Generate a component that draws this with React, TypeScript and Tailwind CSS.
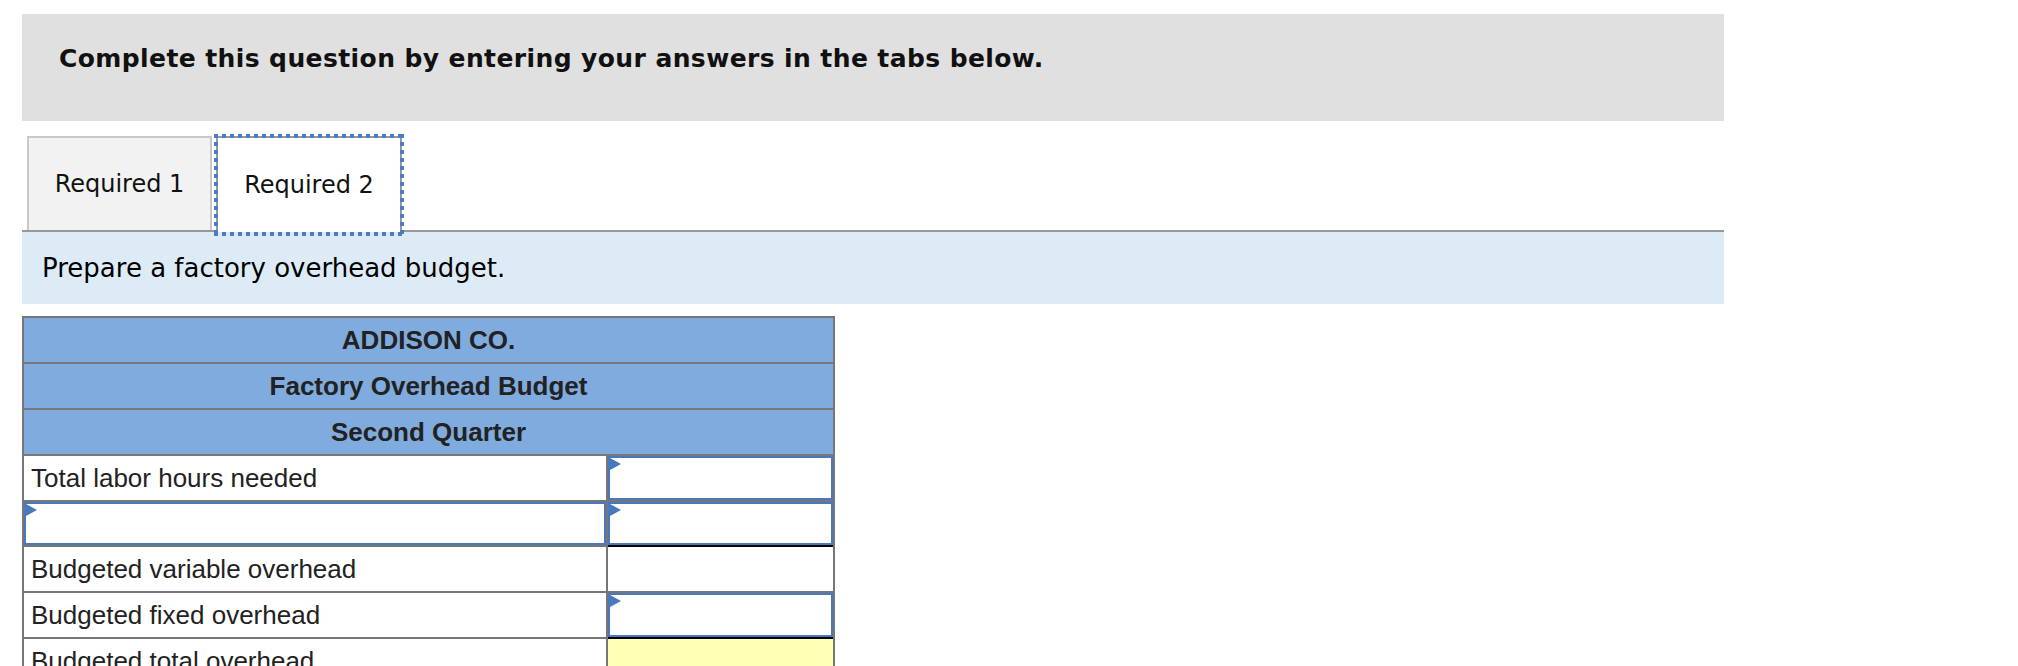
import React from "react";

const labelCell = "flex items-center border-t-2 border-r-2 border-[#777] pl-[7px]";

function Flag() {
  return (
    <svg className="absolute left-0 top-0" width="11" height="12" viewBox="0 0 11 12">
      <path d="M0 0 L11 6 L0 12 Z" fill="#4a78bf" />
    </svg>
  );
}

function InputBox({ bg = "bg-white" }: { bg?: string }) {
  return (
    <div className={`relative h-full w-full border-2 border-[#4a78bf] ${bg}`}>
      <Flag />
    </div>
  );
}

// dotted focus ring drawn as 4px squares with 4px gaps
function FocusRing() {
  return (
    <>
      <span className="absolute -left-[4px] -right-[4px] -top-[4px] h-[4px] bg-[repeating-linear-gradient(90deg,#4a7bc4_0_4px,transparent_4px_8px)]" />
      <span className="absolute -bottom-[4px] -left-[4px] -right-[4px] h-[4px] bg-[repeating-linear-gradient(90deg,#4a7bc4_0_4px,transparent_4px_8px)]" />
      <span className="absolute -bottom-[4px] -left-[4px] -top-[4px] w-[4px] bg-[repeating-linear-gradient(180deg,#4a7bc4_0_4px,transparent_4px_8px)]" />
      <span className="absolute -bottom-[4px] -right-[4px] -top-[4px] w-[4px] bg-[repeating-linear-gradient(180deg,#4a7bc4_0_4px,transparent_4px_8px)]" />
    </>
  );
}

export default function App() {
  return (
    <div className="min-h-screen bg-white pl-[22px] pt-[14px] text-black">
      <div className="w-[1702px]">
        {/* instructions */}
        <div className="h-[107px] bg-[#e0e0e0] pl-[37px] pt-[31px] font-['DejaVu_Sans',Verdana,sans-serif] text-[25px] font-bold leading-[28px] tracking-[0.4px] text-[#111]">
          Complete this question by entering your answers in the tabs below.
        </div>

        {/* tabs */}
        <div className="mt-[15px] flex items-end border-b-2 border-[#999] font-['DejaVu_Sans',Verdana,sans-serif] text-[24px] text-[#111]">
          <div className="ml-[5px] flex h-[94px] w-[185px] items-center justify-center border-2 border-b-0 border-[#c8c8c8] bg-[#f2f2f2]">
            Required 1
          </div>
          <div className="relative z-10 -mb-[2px] ml-[4px] flex h-[96px] w-[186px] items-center justify-center border-2 border-b-0 border-[#999] bg-white">
            Required 2
            <FocusRing />
          </div>
        </div>

        <div className="flex h-[72px] items-center bg-[#ddebf7] pl-[20px] font-['DejaVu_Sans',Verdana,sans-serif] text-[26px] text-black">
          Prepare a factory overhead budget.
        </div>

        {/* budget table */}
        <div className="mt-[12px] w-[813px] border-2 border-b-0 border-[#777] font-['Liberation_Sans',Arial,sans-serif] text-[#222]">
          <div className="flex h-[44px] items-center justify-center bg-[#80abdf] text-[26px] font-bold">ADDISON CO.</div>
          <div className="flex h-[46px] items-center justify-center border-t-2 border-[#777] bg-[#80abdf] text-[26px] font-bold">
            Factory Overhead Budget
          </div>
          <div className="flex h-[46px] items-center justify-center border-t-2 border-[#777] bg-[#80abdf] text-[26px] font-bold">
            Second Quarter
          </div>

          <div className="flex h-[46px] text-[26px]">
            <div className={`${labelCell} w-[584px]`}>Total labor hours needed</div>
            <div className="flex-1 border-t-2 border-[#777]">
              <InputBox />
            </div>
          </div>

          <div className="flex h-[45px] text-[26px]">
            <div className="w-[584px] border-t-2 border-r-2 border-[#777]">
              <InputBox />
            </div>
            <div className="flex-1 border-t-2 border-[#777]">
              <InputBox />
            </div>
          </div>

          <div className="flex h-[46px] text-[26px]">
            <div className={`${labelCell} w-[584px]`}>Budgeted variable overhead</div>
            <div className="flex-1 border-t-2 border-black bg-white" />
          </div>

          <div className="flex h-[46px] text-[26px]">
            <div className={`${labelCell} w-[584px]`}>Budgeted fixed overhead</div>
            <div className="flex-1 border-t-2 border-[#777]">
              <InputBox />
            </div>
          </div>

          <div className="flex h-[46px] text-[26px]">
            <div className={`${labelCell} w-[584px]`}>Budgeted total overhead</div>
            <div className="flex-1 border-t-2 border-black bg-[#ffffb5]" />
          </div>
        </div>
      </div>
    </div>
  );
}
